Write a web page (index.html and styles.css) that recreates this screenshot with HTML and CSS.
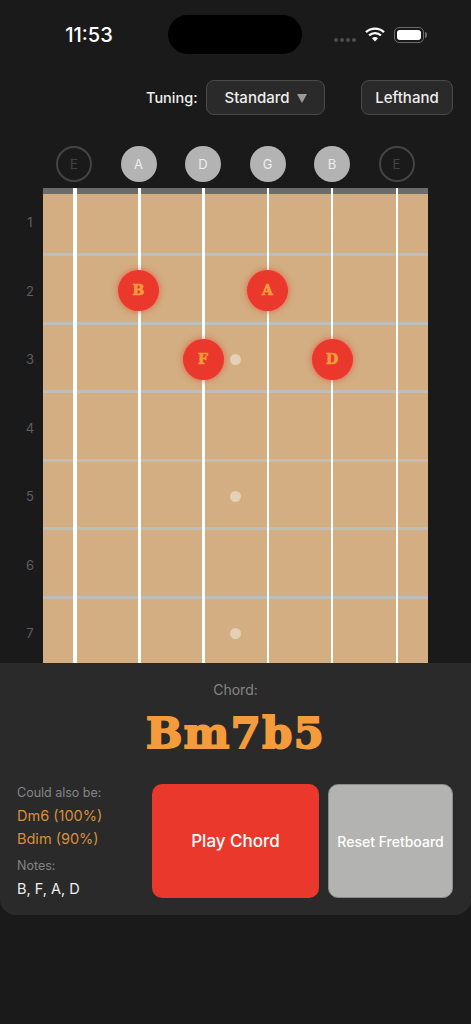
FILE: index.html
```html
<!DOCTYPE html>
<html lang="en">
<head>
    <meta charset="UTF-8">
    <meta name="viewport" content="width=device-width, initial-scale=1.0">

    <link rel="stylesheet" href="styles.css">

    <title>Chord Finder</title>
</head>
<body>
    <div class="status">
        <span class="hora">11:53</span>
        <div class="ilha"></div>
        <div class="status-icones">
            <div class="sinal"><i></i><i></i><i></i><i></i></div>
            <svg class="wifi" width="20" height="15" viewBox="0 0 20 15">
                <path d="M1 5.2 A13 13 0 0 1 19 5.2" fill="none" stroke="#fff" stroke-width="2.3"/>
                <path d="M4.1 8.4 A8.6 8.6 0 0 1 15.9 8.4" fill="none" stroke="#fff" stroke-width="2.3"/>
                <path d="M7 11.3 A4.4 4.4 0 0 1 13 11.3 L10 14.4 Z" fill="#fff"/>
            </svg>
            <div class="bateria"><div class="carga"></div></div>
            <div class="bateria-ponta"></div>
        </div>
    </div>

    <div class="controles">
        <span class="rotulo">Tuning:</span>
        <button type="button" class="botao afinacao">Standard <span class="seta"></span></button>
        <button type="button" class="botao canhoto">Lefthand</button>
    </div>

    <div class="cordas-soltas">
        <div class="solta muda">E</div>
        <div class="solta">A</div>
        <div class="solta">D</div>
        <div class="solta">G</div>
        <div class="solta">B</div>
        <div class="solta muda">E</div>
    </div>

    <div class="braco">
        <div class="casas-numeros">
            <div>1</div>
            <div>2</div>
            <div>3</div>
            <div>4</div>
            <div>5</div>
            <div>6</div>
            <div>7</div>
        </div>
        <div class="escala">
            <div class="pestana"></div>
            <div class="casa"></div>
            <div class="casa"></div>
            <div class="casa"></div>
            <div class="casa"></div>
            <div class="casa"></div>
            <div class="casa"></div>
            <div class="casa"></div>

            <div class="cordas">
                <i class="c1"></i>
                <i class="c2"></i>
                <i class="c3"></i>
                <i class="c4"></i>
                <i class="c5"></i>
                <i class="c6"></i>
            </div>

            <div class="marca m3"></div>
            <div class="marca m5"></div>
            <div class="marca m7"></div>

            <div class="nota n-b">B</div>
            <div class="nota n-a">A</div>
            <div class="nota n-f">F</div>
            <div class="nota n-d">D</div>
        </div>
    </div>

    <div class="painel">
        <div class="acorde-rotulo">Chord:</div>
        <div class="acorde">Bm7b5</div>
        <div class="painel-baixo">
            <div class="info">
                <div class="info-titulo">Could also be:</div>
                <div class="alternativa">Dm6 (100%)</div>
                <div class="alternativa">Bdim (90%)</div>
                <div class="info-titulo notas-titulo">Notes:</div>
                <div class="notas">B, F, A, D</div>
            </div>
            <button type="button" class="tocar">Play Chord</button>
            <button type="button" class="limpar">Reset Fretboard</button>
        </div>
    </div>
</body>
</html>
```

FILE: styles.css
```css
* {
    box-sizing: border-box;
}

body {
    margin: 0;
    width: 471px;
    height: 1024px;
    overflow: hidden;
    background-color: #1a1a1a;
    color: #fff;
    font-family: Inter, "Open Sans", sans-serif;
}

/* barra de status */
.status {
    height: 80px;
    display: grid;
    grid-template-columns: 168px 134px 1fr;
    padding-top: 15px;
}

.hora {
    font-size: 20px;
    font-weight: 500;
    line-height: 40px;
    text-align: center;
    padding-left: 10px;
}

.ilha {
    height: 39px;
    border-radius: 20px;
    background-color: #000;
}

.status-icones {
    display: flex;
    align-items: center;
    height: 40px;
    padding-left: 32px;
}

.sinal {
    display: flex;
    gap: 2px;
    margin-top: 10px;
}

.sinal i {
    width: 4px;
    height: 4px;
    border-radius: 50%;
    background-color: #4e4e4e;
}

.wifi {
    margin-left: 9px;
    margin-top: -1px;
}

.bateria {
    width: 30px;
    height: 16px;
    margin-left: 9px;
    padding: 2px;
    border: 1.5px solid #6a6a6a;
    border-radius: 5px;
}

.carga {
    height: 100%;
    border-radius: 3px;
    background-color: #fff;
}

.bateria-ponta {
    width: 2px;
    height: 6px;
    margin-left: 1px;
    border-radius: 0 2px 2px 0;
    background-color: #6a6a6a;
}

/* afinacao e canhoto */
.controles {
    height: 34px;
    display: flex;
    align-items: center;
    padding-left: 146px;
    font-size: 14.5px;
}

.rotulo {
    width: 60px;
    font-weight: 500;
    color: #eee;
}

.botao {
    height: 35px;
    padding: 0;
    font-family: inherit;
    font-size: 15px;
    font-weight: 500;
    color: #eee;
    background-color: #2a2a2a;
    border: 1px solid #4a4a4a;
    border-radius: 8px;
}

.afinacao {
    width: 119px;
}

.seta {
    display: inline-block;
    margin-left: 3px;
    border-left: 5px solid transparent;
    border-right: 5px solid transparent;
    border-top: 9px solid #9a9a9a;
}

.canhoto {
    width: 92px;
    margin-left: 36px;
}

/* cordas soltas */
.cordas-soltas {
    display: flex;
    gap: 28.5px;
    padding-left: 56px;
    margin-top: 32px;
    height: 42px;
}

.solta {
    width: 36px;
    height: 36px;
    border-radius: 50%;
    background-color: #b3b3b3;
    color: #eee;
    font-size: 13px;
    line-height: 36px;
    text-align: center;
}

.muda {
    background-color: transparent;
    border: 2px solid #444;
    color: #444;
    line-height: 32px;
}

/* braco da guitarra */
.braco {
    display: flex;
    height: 475px;
    overflow: hidden;
}

.casas-numeros {
    width: 43px;
    padding-top: 6px;
    padding-left: 14px;
}

.casas-numeros div {
    height: 68.5px;
    line-height: 56px;
    text-align: center;
    font-size: 13px;
    color: #5f5f5f;
    width: 32px;
}

.escala {
    position: relative;
    width: 385px;
    height: 480px;
    background-color: #d2ae82;
}

.pestana {
    height: 6px;
    background-color: #6c6c6c;
}

.casa {
    height: 68.5px;
    border-bottom: 3px solid #bfbdb8;
}

.pestana + .casa {
    height: 62px;
}

.cordas i {
    position: absolute;
    top: 0;
    bottom: 0;
    background-color: #fff;
}

.c1 { left: 29.5px; width: 4px; }
.c2 { left: 94.5px; width: 3px; }
.c3 { left: 159px; width: 3px; }
.c4 { left: 223.5px; width: 2.5px; }
.c5 { left: 288px; width: 2px; }
.c6 { left: 352.5px; width: 2px; }

.marca {
    position: absolute;
    left: 187px;
    width: 11px;
    height: 11px;
    border-radius: 50%;
    background-color: #e4d0b6;
}

.m3 { top: 165.5px; }
.m5 { top: 302.5px; }
.m7 { top: 439.5px; }

.nota {
    position: absolute;
    width: 41px;
    height: 41px;
    border-radius: 50%;
    background-color: #ea392c;
    box-shadow: 0 0 6px rgba(238, 58, 44, 0.7);
    color: #f49c3c;
    font-family: "DejaVu Serif", serif;
    font-size: 14px;
    font-weight: bold;
    line-height: 41px;
    text-align: center;
    -webkit-text-stroke: 0.7px #f49c3c;
}

.n-b { left: 75px; top: 82px; }
.n-a { left: 204px; top: 82px; }
.n-f { left: 139.5px; top: 150.5px; }
.n-d { left: 268.5px; top: 150.5px; }

/* painel de baixo */
.painel {
    height: 252px;
    padding-top: 18px;
    background-color: #2a2a2a;
    border-radius: 0 0 16px 16px;
}

.acorde-rotulo {
    font-size: 14px;
    line-height: 17px;
    text-align: center;
    color: #858585;
}

.acorde {
    margin-top: 6px;
    height: 58px;
    font-family: "DejaVu Serif", serif;
    font-size: 43px;
    font-weight: bold;
    line-height: 58px;
    letter-spacing: 1.5px;
    text-align: center;
    color: #f49c3c;
    -webkit-text-stroke: 2px #f49c3c;
}

.painel-baixo {
    display: flex;
    margin-top: 22px;
    padding: 0 18px 0 17px;
}

.info {
    width: 135px;
    padding-top: 1px;
}

.info-titulo {
    font-size: 12.5px;
    line-height: 16px;
    color: #858585;
}

.alternativa {
    font-size: 14.5px;
    line-height: 23px;
    color: #d98f3a;
    margin-top: 3px;
}

.alternativa + .alternativa {
    margin-top: 0;
}

.notas-titulo {
    margin-top: 8px;
}

.notas {
    margin-top: 3px;
    font-size: 14.5px;
    line-height: 23px;
    color: #eee;
}

.tocar,
.limpar {
    height: 114px;
    padding: 0;
    border: 1px solid transparent;
    border-radius: 10px;
    font-family: inherit;
    font-weight: 500;
    color: #fff;
}

.tocar {
    width: 167px;
    font-size: 17px;
    background-color: #ea392c;
}

.limpar {
    width: 125px;
    margin-left: 9px;
    font-size: 14px;
    background-color: #b3b3b1;
    border-color: #8a8a8a;
}
```
